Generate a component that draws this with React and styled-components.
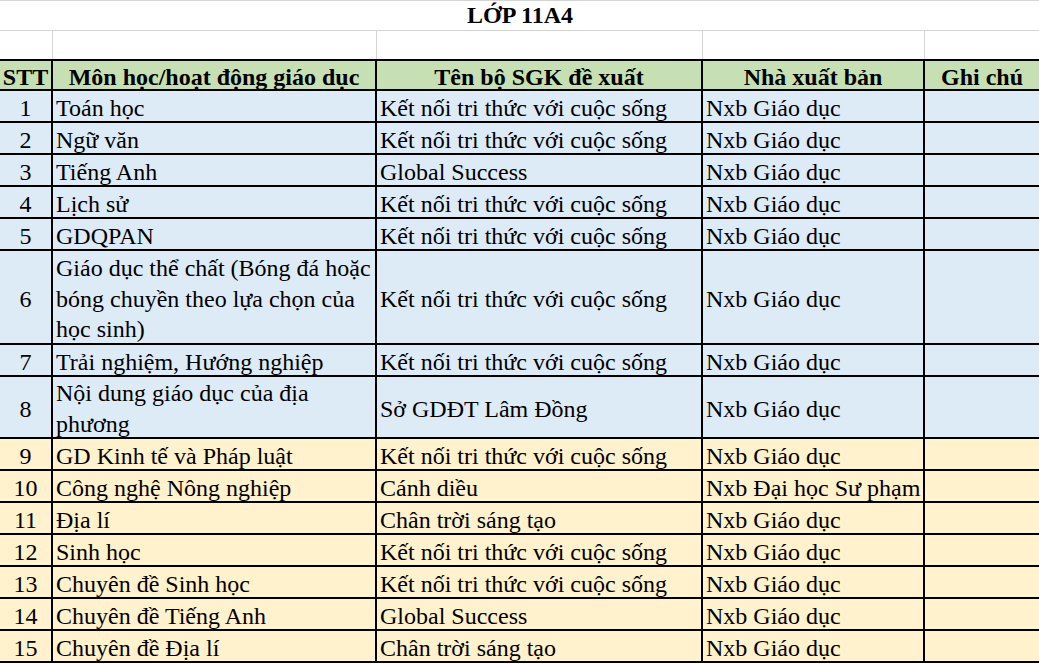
import React from "react";
import styled, { createGlobalStyle } from "styled-components";

const GlobalStyle = createGlobalStyle`
  html, body {
    margin: 0;
    padding: 0;
    background: #ffffff;
  }
  body {
    font-family: "Liberation Serif", "Times New Roman", serif;
    color: #000000;
  }
`;

const COLUMNS = "53px 324px 326px 222px 114px";

const tones = {
  head: "#c6e0b4",
  blue: "#ddebf7",
  yellow: "#fff2cc",
};

const Sheet = styled.div`
  width: 1039px;
  height: 665px;
  overflow: hidden;
`;

const TitleRow = styled.div`
  height: 31px;
  box-sizing: border-box;
  border-top: 1px solid #d4d4d4;
  border-bottom: 1px solid #d4d4d4;
  font-size: 24px;
  font-weight: 700;
  line-height: 28px;
  text-align: center;
  padding-left: 1px;
`;

const BlankRow = styled.div`
  display: grid;
  grid-template-columns: ${COLUMNS};
  height: 28px;
`;

const BlankCell = styled.div`
  box-sizing: border-box;
  border-right: 1px solid #d4d4d4;
  &:last-child {
    border-right: none;
  }
`;

const Table = styled.div`
  border-top: 2px solid #000000;
`;

const Row = styled.div`
  display: grid;
  grid-template-columns: ${COLUMNS};
  background: ${(p) => tones[p.$tone]};
`;

const Cell = styled.div`
  box-sizing: border-box;
  height: ${(p) => p.$h + 2}px;
  border-right: 2px solid #000000;
  border-bottom: 2px solid #000000;
  padding: 4px 3px 0;
  display: flex;
  align-items: center;
  justify-content: ${(p) => (p.$center ? "center" : "flex-start")};
  text-align: ${(p) => (p.$center ? "center" : "left")};
  font-size: 24px;
  line-height: ${(p) => (p.$h > 30 ? "30.7px" : "30px")};
  font-weight: ${(p) => (p.$bold ? 700 : 400)};
  white-space: ${(p) => (p.$wrap ? "normal" : "nowrap")};
  &:last-child {
    border-right: none;
  }
`;

const CellText = styled.span`
  display: block;
`;

const headers = [
  "STT",
  "Môn học/hoạt động giáo dục",
  "Tên bộ SGK đề xuất",
  "Nhà xuất bản",
  "Ghi chú",
];

const KNTT = "Kết nối tri thức với cuộc sống";
const GD = "Nxb Giáo dục";

const rows = [
  { subject: "Toán học", book: KNTT, pub: GD, tone: "blue" },
  { subject: "Ngữ văn", book: KNTT, pub: GD, tone: "blue" },
  { subject: "Tiếng Anh", book: "Global Success", pub: GD, tone: "blue" },
  { subject: "Lịch sử", book: KNTT, pub: GD, tone: "blue" },
  { subject: "GDQPAN", book: KNTT, pub: GD, tone: "blue" },
  {
    subject: "Giáo dục thể chất (Bóng đá hoặc bóng chuyền theo lựa chọn của học sinh)",
    book: KNTT,
    pub: GD,
    tone: "blue",
    h: 92,
  },
  { subject: "Trải nghiệm, Hướng nghiệp", book: KNTT, pub: GD, tone: "blue" },
  {
    subject: "Nội dung giáo dục của địa phương",
    book: "Sở GDĐT Lâm Đồng",
    pub: GD,
    tone: "blue",
    h: 60,
  },
  { subject: "GD Kinh tế và Pháp luật", book: KNTT, pub: GD, tone: "yellow" },
  { subject: "Công nghệ Nông nghiệp", book: "Cánh diều", pub: "Nxb Đại học Sư phạm", tone: "yellow" },
  { subject: "Địa lí", book: "Chân trời sáng tạo", pub: GD, tone: "yellow" },
  { subject: "Sinh học", book: KNTT, pub: GD, tone: "yellow" },
  { subject: "Chuyên đề Sinh học", book: KNTT, pub: GD, tone: "yellow" },
  { subject: "Chuyên đề Tiếng Anh", book: "Global Success", pub: GD, tone: "yellow" },
  { subject: "Chuyên đề Địa lí", book: "Chân trời sáng tạo", pub: GD, tone: "yellow" },
];

const App = () => {
  return (
    <>
      <GlobalStyle />
      <Sheet>
        <TitleRow>LỚP 11A4</TitleRow>
        <BlankRow>
          {headers.map((h) => (
            <BlankCell key={h} />
          ))}
        </BlankRow>
        <Table>
          <Row $tone="head">
            {headers.map((h) => (
              <Cell key={h} $h={28} $center $bold>
                {h}
              </Cell>
            ))}
          </Row>
          {rows.map((r, i) => {
            const h = r.h || 30;
            return (
              <Row key={i} $tone={r.tone}>
                <Cell $h={h} $center>
                  {i + 1}
                </Cell>
                <Cell $h={h} $wrap>
                  <CellText>{r.subject}</CellText>
                </Cell>
                <Cell $h={h}>{r.book}</Cell>
                <Cell $h={h}>{r.pub}</Cell>
                <Cell $h={h} />
              </Row>
            );
          })}
        </Table>
      </Sheet>
    </>
  );
};

export default App;
